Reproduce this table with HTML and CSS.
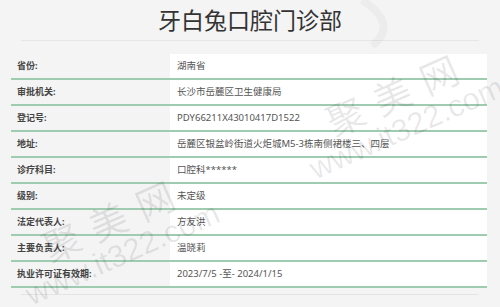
FILE: index.html
```html
<!DOCTYPE html>
<html lang="zh">
<head>
<meta charset="utf-8">
<link rel="stylesheet" href="styles.css">
</head>
<body>
<div class="page">
  <h1 class="title">牙白兔口腔门诊部</h1>
  <div class="info">
    <div class="row"><div class="label">省份:</div><div class="value">湖南省</div></div>
    <div class="row"><div class="label">审批机关:</div><div class="value">长沙市岳麓区卫生健康局</div></div>
    <div class="row"><div class="label">登记号:</div><div class="value">PDY66211X43010417D1522</div></div>
    <div class="row"><div class="label">地址:</div><div class="value">岳麓区银盆岭街道火炬城M5-3栋南侧裙楼三、四层</div></div>
    <div class="row"><div class="label">诊疗科目:</div><div class="value">口腔科******</div></div>
    <div class="row"><div class="label">级别:</div><div class="value">未定级</div></div>
    <div class="row"><div class="label">法定代表人:</div><div class="value">方友洪</div></div>
    <div class="row"><div class="label">主要负责人:</div><div class="value">温晓莉</div></div>
    <div class="row"><div class="label">执业许可证有效期:</div><div class="value">2023/7/5 -至- 2024/1/15</div></div>
  </div>
  <div class="foot-line"></div>

  <svg class="logo-mark" width="500" height="307" viewBox="0 0 500 307">
    <path d="M362 0 C 385 15, 392 30, 372 46" fill="none" stroke="rgba(0,0,0,0.03)" stroke-width="8"/>
  </svg>
  <div class="wm wm-a"><span class="wm-cn">聚美网</span><span class="wm-en">www.it322.com</span></div>
  <div class="wm wm-b"><span class="wm-cn">聚美网</span><span class="wm-en">www.it322.com</span></div>
</div>
</body>
</html>
```
FILE: styles.css
```css
html, body {
  margin: 0;
  padding: 0;
}
body {
  background: #f4f4f4;
  font-family: "Noto Sans", "Noto Sans CJK SC", sans-serif;
  width: 500px;
  height: 307px;
  overflow: hidden;
}
.page {
  position: relative;
  width: 500px;
  height: 307px;
}
.title {
  margin: 0 21px;
  height: 40px;
  line-height: 38px;
  font-family: "Noto Sans CJK SC", sans-serif;
  font-size: 23px;
  font-weight: 400;
  color: #333;
  text-align: center;
  border-bottom: 1px solid #e6e6e6;
}
.info {
  margin: 13px 13px 0 11px;
}
.row {
  display: flex;
  height: 24px;
  border-bottom: 2px solid #9fcbb1;
}
.label {
  width: 153px;
  padding-left: 6px;
  font-size: 9px;
  font-weight: 700;
  color: #444;
  line-height: 24px;
}
.value {
  flex: 1;
  background: #fff;
  padding-left: 7px;
  font-size: 9.5px;
  color: #555;
  line-height: 24px;
}
.foot-line {
  margin: 6px 22px 0 21px;
  border-top: 1px solid #e4e4e4;
}
.logo-mark {
  position: absolute;
  left: 0;
  top: 0;
  pointer-events: none;
}
.wm {
  position: absolute;
  display: flex;
  flex-direction: column;
  align-items: center;
  color: rgba(0, 0, 0, 0.09);
  transform: rotate(-24deg);
  pointer-events: none;
  white-space: nowrap;
}
.wm-cn {
  font-family: "Noto Sans CJK SC", sans-serif;
  font-size: 38px;
  letter-spacing: 13px;
  padding-left: 13px;
  line-height: 42px;
}
.wm-en {
  font-family: "Liberation Sans", sans-serif;
  font-size: 31px;
  line-height: 32px;
}
.wm-a {
  left: 294px;
  top: 72px;
}
.wm-b {
  left: 10px;
  top: 198px;
}
```
